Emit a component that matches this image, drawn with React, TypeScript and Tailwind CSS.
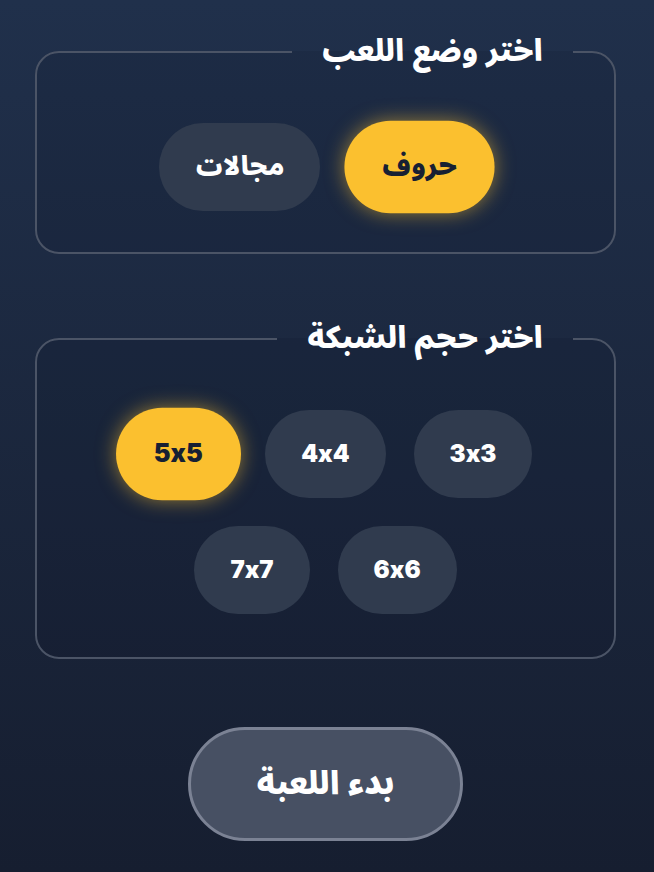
import React from "react";

const arabic = { fontFamily: '"Noto Sans Arabic", "DejaVu Sans", sans-serif' };
const latin = { fontFamily: 'Inter, "DejaVu Sans", sans-serif' };

function Pill({ label, active, latinText }: { label: string; active?: boolean; latinText?: boolean }) {
  return (
    <button
      style={latinText ? latin : arabic}
      className={
        "rounded-[44px] px-9 py-7 leading-8 font-black [font-feature-settings:'calt'_0] " +
        (latinText ? "text-2xl " : "text-[26px] ") +
        (active
          ? "bg-[#fbc02f] text-[#172033] scale-105 shadow-[0_0_18px_rgba(251,192,47,0.55)]"
          : "bg-[#303b4e] text-white")
      }
    >
      {label}
    </button>
  );
}

export default function App() {
  return (
    <div
      dir="rtl"
      className="min-h-screen w-full bg-gradient-to-b from-[#20304b] to-[#161e30] pt-8"
    >
      <div className="w-[651px] mr-auto flex flex-col items-center">
        <fieldset className="w-[581px] rounded-3xl border-2 border-[#4b5466] bg-[#0f172a]/15 pb-[41px]">
          <legend
            style={arabic}
            className="mr-[41px] px-[30px] text-[30px] leading-10 font-black text-white"
          >
            اختر وضع اللعب
          </legend>
          <div className="mt-[51px] flex justify-center gap-7">
            <Pill label="حروف" active />
            <Pill label="مجالات" />
          </div>
        </fieldset>

        <fieldset className="mt-[65px] w-[581px] rounded-3xl border-2 border-[#4b5466] bg-[#0f172a]/15 pb-[43px]">
          <legend
            style={arabic}
            className="mr-[41px] px-[30px] text-[30px] leading-10 font-black text-white"
          >
            اختر حجم الشبكة
          </legend>
          <div className="mt-[51px] mx-auto max-w-[480px] flex flex-wrap justify-center gap-7">
            <Pill label="3x3" latinText />
            <Pill label="4x4" latinText />
            <Pill label="5x5" latinText active />
            <Pill label="6x6" latinText />
            <Pill label="7x7" latinText />
          </div>
        </fieldset>

        <button
          style={arabic}
          className="mt-[68px] h-[114px] w-[275px] rounded-[57px] border-[3px] border-[#7b8294] bg-[#475063] text-[32px] font-black text-white"
        >
          بدء اللعبة
        </button>
      </div>
    </div>
  );
}
